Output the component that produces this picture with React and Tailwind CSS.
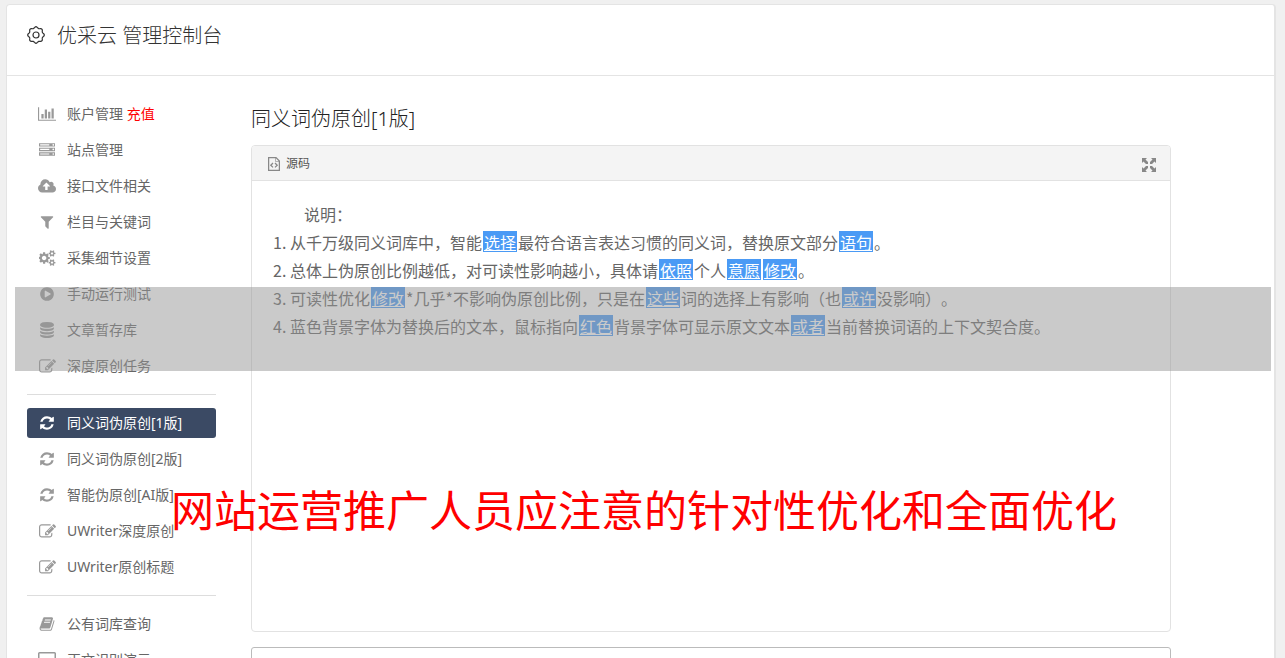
import React from 'react';

const icons = {
    chart: {
        box: '0 0 2048 1792',
        size: 'w-[18px] h-4',
        d: 'M640 896v512h-256v-512h256zm384-512v1024h-256v-1024h256zm1024 1152v128h-2048v-1536h128v1408h1920zm-640-896v768h-256v-768h256zm384-384v1152h-256v-1152h256z',
    },
    server: {
        box: '0 0 1792 1792',
        size: 'w-4 h-4',
        d: 'M128 1408h1024v-128h-1024v128zm0-512h1024v-128h-1024v128zm1568 448q0-40-28-68t-68-28-68 28-28 68 28 68 68 28 68-28 28-68zm-1568-960h1024v-128h-1024v128zm1568 448q0-40-28-68t-68-28-68 28-28 68 28 68 68 28 68-28 28-68zm0-512q0-40-28-68t-68-28-68 28-28 68 28 68 68 28 68-28 28-68zm96 832v384h-1792v-384h1792zm0-512v384h-1792v-384h1792zm0-512v384h-1792v-384h1792z',
    },
    cloud: {
        box: '-64 0 1920 1792',
        size: 'w-[18px] h-[17px]',
        d: 'M1216 864q0-14-9-23l-352-352q-9-9-23-9t-23 9l-351 351q-10 12-10 24 0 14 9 23t23 9h224v352q0 13 9.5 22.5t22.5 9.5h192q13 0 22.5-9.5t9.5-22.5v-352h224q13 0 22.5-9.5t9.5-22.5zm640 288q0 159-112.5 271.5t-271.5 112.5h-1088q-185 0-316.5-131.5t-131.5-316.5q0-130 70-240t188-165q-2-30-2-43 0-212 150-362t362-150q156 0 285.5 87t188.5 231q71-62 166-62 106 0 181 75t75 181q0 76-41 138 130 31 213.5 135.5t83.5 238.5z',
    },
    filter: {
        box: '0 0 1792 1792',
        size: 'w-4 h-4',
        d: 'M1595 295q17 41-14 70l-493 493v742q0 42-39 59-13 5-25 5-27 0-45-19l-256-256q-19-19-19-45v-486l-493-493q-31-29-14-70 17-39 59-39h1280q42 0 59 39z',
    },
    cogs: {
        box: '0 0 1920 1792',
        size: 'w-[17px] h-4',
        d: 'M832 896q0-106-75-181t-181-75-181 75-75 181 75 181 181 75 181-75 75-181zm768 512q0-52-38-90t-90-38-90 38-38 90q0 53 37.5 90.5t90.5 37.5 90.5-37.5 37.5-90.5zm0-1024q0-52-38-90t-90-38-90 38-38 90q0 53 37.5 90.5t90.5 37.5 90.5-37.5 37.5-90.5zm-384 421v185q0 10-7 19.5t-16 10.5l-155 24q-11 35-32 76 34 48 90 115 7 11 7 20 0 12-7 19-23 30-82.5 89.5t-78.5 59.5q-11 0-21-7l-115-90q-37 19-77 31-11 108-23 155-7 24-30 24h-186q-11 0-20-7.5t-10-17.5l-23-153q-34-10-75-31l-118 89q-7 7-20 7-11 0-21-8-144-133-144-160 0-9 7-19 10-14 41-53t47-61q-23-44-35-82l-152-24q-10-1-17-9.5t-7-19.5v-185q0-10 7-19.5t16-10.5l155-24q11-35 32-76-34-48-90-115-7-11-7-20 0-12 7-20 22-30 82-89t79-59q11 0 21 7l115 90q34-18 77-32 11-108 23-154 7-24 30-24h186q11 0 20 7.5t10 17.5l23 153q34 10 75 31l118-89q8-7 20-7 11 0 21 8 144 133 144 160 0 8-7 19-12 16-42 54t-45 60q23 48 34 82l152 23q10 2 17 10.5t7 19.5zm640 533v140q0 16-149 31-12 27-30 52 51 113 51 138 0 4-4 7-122 71-124 71-8 0-46-47t-52-68q-20 2-30 2t-30-2q-14 21-52 68t-46 47q-2 0-124-71-4-3-4-7 0-25 51-138-18-25-30-52-149-15-149-31v-140q0-16 149-31 13-29 30-52-51-113-51-138 0-4 4-7 4-2 35-20t59-34 30-16q8 0 46 46.5t52 67.5q20-2 30-2t30 2q51-71 92-112l6-2q4 0 124 70 4 3 4 7 0 25-51 138 17 23 30 52 149 15 149 31zm0-1024v140q0 16-149 31-12 27-30 52 51 113 51 138 0 4-4 7-122 71-124 71-8 0-46-47t-52-68q-20 2-30 2t-30-2q-14 21-52 68t-46 47q-2 0-124-71-4-3-4-7 0-25 51-138-18-25-30-52-149-15-149-31v-140q0-16 149-31 13-29 30-52-51-113-51-138 0-4 4-7 4-2 35-20t59-34 30-16q8 0 46 46.5t52 67.5q20-2 30-2t30 2q51-71 92-112l6-2q4 0 124 70 4 3 4 7 0 25-51 138 17 23 30 52 149 15 149 31z',
    },
    play: {
        box: '0 0 1792 1792',
        size: 'w-4 h-4',
        d: 'M896 128q209 0 385.5 103t279.5 279.5 103 385.5-103 385.5-279.5 279.5-385.5 103-385.5-103-279.5-279.5-103-385.5 103-385.5 279.5-279.5 385.5-103zm384 823q32-18 32-55t-32-55l-544-320q-31-19-64-1-32 19-32 56v640q0 37 32 56 16 8 32 8 17 0 32-9z',
    },
    database: {
        box: '0 0 1792 1792',
        size: 'w-4 h-4',
        d: 'M896 768q237 0 443-43t325-127v170q0 69-103 128t-280 93.5-385 34.5-385-34.5-280-93.5-103-128v-170q119 84 325 127t443 43zm0 768q237 0 443-43t325-127v170q0 69-103 128t-280 93.5-385 34.5-385-34.5-280-93.5-103-128v-170q119 84 325 127t443 43zm0-384q237 0 443-43t325-127v170q0 69-103 128t-280 93.5-385 34.5-385-34.5-280-93.5-103-128v-170q119 84 325 127t443 43zm0-1152q208 0 385 34.5t280 93.5 103 128v128q0 69-103 128t-280 93.5-385 34.5-385-34.5-280-93.5-103-128v-128q0-69 103-128t280-93.5 385-34.5z',
    },
    edit: {
        box: '0 0 1792 1792',
        size: 'w-[17px] h-[17px]',
        d: 'M888 1184l116-116-152-152-116 116v56h96v96h56zm440-720q-16-16-33 1l-350 350q-17 17-1 33t33-1l350-350q17-17 1-33zm80 594v190q0 119-84.5 203.5t-203.5 84.5h-832q-119 0-203.5-84.5t-84.5-203.5v-832q0-119 84.5-203.5t203.5-84.5h832q63 0 117 25 15 7 18 23 3 17-9 29l-49 49q-14 14-32 8-23-6-45-6h-832q-66 0-113 47t-47 113v832q0 66 47 113t113 47h832q66 0 113-47t47-113v-126q0-13 9-22l64-64q15-15 35-7t20 29zm-96-738l288 288-672 672h-288v-288zm444 132l-92 92-288-288 92-92q28-28 68-28t68 28l152 152q28 28 28 68t-28 68z',
    },
    refresh: {
        box: '-128 -128 1792 1792',
        size: 'w-4 h-4',
        d: 'M1511 928q0 5-1 7-64 268-268 434.5t-478 166.5q-146 0-282.5-55t-243.5-157l-129 129q-19 19-45 19t-45-19-19-45v-448q0-26 19-45t45-19h448q26 0 45 19t19 45-19 45l-137 137q71 66 161 102t187 36q134 0 250-65t186-179q11-17 53-117 8-23 30-23h192q13 0 22.5 9.5t9.5 22.5zm25-800v448q0 26-19 45t-45 19h-448q-26 0-45-19t-19-45 19-45l138-138q-148-137-349-137-134 0-250 65t-186 179q-11 17-53 117-8 23-30 23h-199q-13 0-22.5-9.5t-9.5-22.5v-7q65-268 270-434.5t480-166.5q146 0 284 55.5t245 156.5l130-129q19-19 45-19t45 19 19 45z',
    },
    book: {
        box: '0 0 1792 1792',
        size: 'w-4 h-4',
        d: 'M1703 478q40 57 18 129l-275 906q-19 64-76.5 107.5t-122.5 43.5h-923q-77 0-148.5-53.5t-99.5-131.5q-24-67-2-127 0-4 3-27t4-37q1-8-3-21.5t-3-19.5q2-11 8-21t16.5-23.5 16.5-23.5q23-38 45-91.5t30-91.5q3-10 .5-30t-.5-28q3-11 17-28t17-23q21-36 42-92t25-90q1-9-2.5-32t.5-28q4-13 22-30.5t22-22.5q19-26 42.5-84.5t27.5-96.5q1-8-3-25.5t-2-26.5q2-8 9-18t18-23 17-21q8-12 16.5-30.5t15-35 16-36 19.5-32 26.5-23.5 36-11.5 47.5 5.5l-1 3q38-9 51-9h761q74 0 114 56t18 130l-274 906q-36 119-71.5 153.5t-128.5 34.5h-869q-27 0-38 15-11 16-1 43 24 70 144 70h923q29 0 56-15.5t35-41.5l300-987q7-22 5-57 38 15 59 43zm-1064 2q-4 13 2 22.5t20 9.5h608q13 0 25.5-9.5t16.5-22.5l21-64q4-13-2-22.5t-20-9.5h-608q-13 0-25.5 9.5t-16.5 22.5zm-83 256q-4 13 2 22.5t20 9.5h608q13 0 25.5-9.5t16.5-22.5l21-64q4-13-2-22.5t-20-9.5h-608q-13 0-25.5 9.5t-16.5 22.5z',
    },
    desktop: {
        box: '0 0 18 16',
        size: 'w-[18px] h-4',
        d: 'M1.5 0h15A1.5 1.5 0 0 1 18 1.5v10a1.5 1.5 0 0 1-1.5 1.5H12l1 3H5l1-3H1.5A1.5 1.5 0 0 1 0 11.5v-10A1.5 1.5 0 0 1 1.5 0zM1.5 1.5v8h15v-8z',
    },
};

const menuGroups = [
    [
        { icon: 'chart', label: '账户管理', extra: '充值' },
        { icon: 'server', label: '站点管理' },
        { icon: 'cloud', label: '接口文件相关' },
        { icon: 'filter', label: '栏目与关键词' },
        { icon: 'cogs', label: '采集细节设置' },
        { icon: 'play', label: '手动运行测试' },
        { icon: 'database', label: '文章暂存库' },
        { icon: 'edit', label: '深度原创任务' },
    ],
    [
        { icon: 'refresh', label: '同义词伪原创[1版]', active: true },
        { icon: 'refresh', label: '同义词伪原创[2版]' },
        { icon: 'refresh', label: '智能伪原创[AI版]' },
        { icon: 'edit', label: 'UWriter深度原创' },
        { icon: 'edit', label: 'UWriter原创标题' },
    ],
    [
        { icon: 'book', label: '公有词库查询' },
        { icon: 'desktop', label: '正文识别演示' },
    ],
];

// wavy outline of the settings gear, eight teeth
const gearPoints = Array.from({ length: 96 }, (_, i) => {
    const a = (i / 96) * Math.PI * 2;
    const r = 7.6 + 0.7 * Math.cos(8 * a);
    return `${(9 + r * Math.cos(a)).toFixed(2)},${(9 + r * Math.sin(a)).toFixed(2)}`;
}).join(' ');

const GearIcon = () => (
    <svg viewBox="0 0 18 18" className="w-[18px] h-[18px]" fill="none" stroke="currentColor" strokeWidth="1.2" aria-hidden="true">
        <polygon points={gearPoints} />
        <circle cx="9" cy="9" r="3" />
    </svg>
);

const SourceIcon = () => (
    <svg viewBox="0 0 12 14" className="w-3 h-[14px]" fill="none" stroke="#888" strokeWidth="1.3" aria-hidden="true">
        <path d="M.6.6h7.4l3.4 3.4v9.4H.6z" />
        <path d="M7.5.5v4h4" strokeWidth=".6" />
        <path d="M5 6L2.8 8.2 5 10.4M7 6l2.2 2.200L7 10.4" />
    </svg>
);

const ExpandIcon = () => (
    <svg viewBox="0 0 14 14" className="w-[14px] h-[14px]" fill="#888" aria-hidden="true">
        <path d="M0 0h5L3.5 1.5 6 4v2H4L1.5 3.5 0 5z" />
        <path d="M14 0v5l-1.5-1.5L10 6H8V4l2.5-2.500L9 0z" />
        <path d="M0 14V9l1.5 1.5L4 8h2v2l-2.5 2.5L5 14z" />
        <path d="M14 14H9l1.5-1.5L8 10V8h2l2.5 2.5L14 9z" />
    </svg>
);

const MenuIcon = ({ name }) => {
    const icon = icons[name];
    return (
        <svg viewBox={icon.box} className={icon.size} fill="currentColor" aria-hidden="true">
            <path fillRule={name === 'desktop' ? 'evenodd' : 'nonzero'} d={icon.d} />
        </svg>
    );
};

const MenuItem = ({ item }) => (
    <li>
        <a
            href="#"
            className={`flex items-center h-[30px] px-2.5 gap-2.5 rounded-[3px] text-sm whitespace-nowrap ${
                item.active ? 'bg-[#3b4a64] text-white' : 'text-[#666]'
            }`}
        >
            <span className={`w-5 flex justify-center ${item.active ? 'text-white' : 'text-[#999]'}`}>
                <MenuIcon name={item.icon} />
            </span>
            <span>
                {item.label}
                {item.extra && <span className="text-[#f00]"> {item.extra}</span>}
            </span>
        </a>
    </li>
);

const Sidebar = () => (
    <nav className="w-[189px] shrink-0 pt-[23px]">
        {menuGroups.map((group, index) => (
            <ul
                key={index}
                className={`flex flex-col gap-1.5 ${index > 0 ? 'mt-[13px] pt-[13px] border-t border-[#ddd]' : ''}`}
            >
                {group.map((item) => (
                    <MenuItem key={item.label} item={item} />
                ))}
            </ul>
        ))}
    </nav>
);

const Word = ({ children }) => (
    <u className="inline-block h-[21px] leading-[22px] mx-px px-px bg-[#4a9af5] text-white underline">{children}</u>
);

const Editor = () => (
    <section className="border border-[#e2e2e2] rounded-[4px] bg-white overflow-hidden">
        <div className="flex items-center justify-between h-[35px] pl-4 pr-[14px] pt-0.5 bg-[#f4f4f4] border-b border-[#e2e2e2]">
            <button type="button" className="flex items-center gap-1.5 text-xs text-[#555]">
                <SourceIcon />
                源码
            </button>
            <button type="button" aria-label="全屏" className="pt-0.5">
                <ExpandIcon />
            </button>
        </div>
        <div className="h-[450px] px-5 pt-[19px] text-base leading-7 text-[#666] font-['Noto_Sans_CJK_SC',sans-serif] [text-spacing-trim:space-all]">
            <p className="indent-8">说明：</p>
            <ol className="list-decimal pl-[18px]">
                <li>
                    从千万级同义词库中，智能<Word>选择</Word>最符合语言表达习惯的同义词，替换原文部分<Word>语句</Word>。
                </li>
                <li>
                    总体上伪原创比例越低，对可读性影响越小，具体请<Word>依照</Word>个人<Word>意愿</Word><Word>修改</Word>。
                </li>
                <li>
                    可读性优化<Word>修改</Word>*几乎*不影响伪原创比例，只是在<Word>这些</Word>词的选择上有影响（也<Word>或许</Word>没影响）。
                </li>
                <li>
                    蓝色背景字体为替换后的文本，鼠标指向<Word>红色</Word>背景字体可显示原文文本<Word>或者</Word>当前替换词语的上下文契合度。
                </li>
            </ol>
        </div>
    </section>
);

const App = () => {
    return (
        <div className="relative h-screen overflow-hidden pt-1 pl-1.5 pr-[9px] bg-[#f0f0f0] font-['Noto_Sans','Noto_Sans_CJK_SC',sans-serif]">
            <div className="min-h-screen bg-white border border-r-2 border-[#e4e4e4] rounded-t-[4px]">
                <header className="flex items-start h-[71px] pl-5 pt-4 border-b border-[#e4e4e4] text-[#333]">
                    <div className="flex items-center gap-3 h-[30px]">
                        <span className="pb-0.5">
                            <GearIcon />
                        </span>
                        <h1 className="text-xl leading-[30px] font-light">优采云 管理控制台</h1>
                    </div>
                </header>

                <div className="flex gap-[35px] pl-5 pr-[103px]">
                    <Sidebar />
                    <main className="flex-1 min-w-0 pt-7">
                        <h2 className="mb-[11px] text-xl leading-[30px] font-light text-[#222]">同义词伪原创[1版]</h2>
                        <Editor />
                        <textarea
                            aria-label="结果"
                            className="block w-full h-40 mt-[15px] border border-[#bbb] rounded-[3px] bg-white resize-none"
                        />
                    </main>
                </div>
            </div>

            {/* translucent band and caption lying over the page */}
            <div className="absolute left-[15px] right-[14px] top-[287px] h-[84px] bg-[#969696]/50" />
            <p className="absolute left-[171px] top-[476px] text-[43px] leading-[64px] whitespace-nowrap text-[#f00] font-['Noto_Sans_CJK_SC',sans-serif]">
                网站运营推广人员应注意的针对性优化和全面优化
            </p>
        </div>
    );
};

export default App;
